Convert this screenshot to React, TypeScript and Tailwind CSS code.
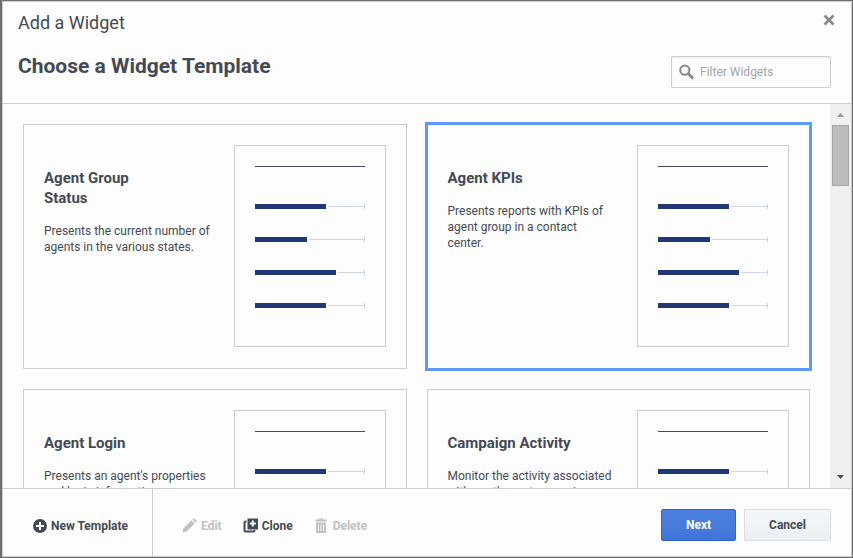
import React, { useState } from 'react';

interface WidgetTemplate {
  title: string;
  description: string;
}

const templates: WidgetTemplate[] = [
  { title: 'Agent Group Status', description: 'Presents the current number of agents in the various states.' },
  { title: 'Agent KPIs', description: 'Presents reports with KPIs of agent group in a contact center.' },
  { title: 'Agent Login', description: "Presents an agent's properties and login information." },
  { title: 'Campaign Activity', description: 'Monitor the activity associated with another set campaign.' },
];

const previewBars = [71, 52, 81, 71];

const CloseIcon = () => (
  <svg className="size-3" viewBox="0 0 12 12" fill="none" stroke="currentColor" strokeWidth="2.6">
    <path d="M1.500 1.500l9 9M10.500 1.500l-9 9" />
  </svg>
);

const SearchIcon = () => (
  <svg className="size-4 shrink-0 text-[#85888d]" viewBox="0 0 16 16" fill="none" stroke="currentColor">
    <circle cx="5.8" cy="6.2" r="4.6" strokeWidth="2" />
    <path d="M9.4 9.8l3.900 4" strokeWidth="3" strokeLinecap="round" />
  </svg>
);

const PlusIcon = () => (
  <svg className="size-3.5" viewBox="0 0 14 14">
    <circle cx="7" cy="7" r="7" fill="currentColor" />
    <path d="M7 3v8M3 7h8" stroke="#fdfdfd" strokeWidth="2" />
  </svg>
);

const PencilIcon = () => (
  <svg className="size-[15px]" viewBox="0 0 15 15" fill="currentColor">
    <path d="M0.500 14.500l.8-3.900L9.600 2.300l3.100 3.100L4.400 13.700z" />
    <path d="M10.300 1.600l.9-.9a1 1 0 0 1 1.400 0l1.700 1.700a1 1 0 0 1 0 1.400l-.9.9z" />
  </svg>
);

const CloneIcon = () => (
  <svg className="size-[15px]" viewBox="0 0 15 15">
    <path d="M3.500 3.500H2.500a1 1 0 0 0-1 1v8a1 1 0 0 0 1 1h8a1 1 0 0 0 1-1v-.500" fill="none" stroke="currentColor" strokeWidth="2" />
    <path d="M4.500 0.500H15V11.500H4.500z" fill="currentColor" />
    <path d="M9.800 2.500v6M6.800 5.500h6" stroke="#fdfdfd" strokeWidth="2" />
  </svg>
);

const TrashIcon = () => (
  <svg className="size-[15px]" viewBox="0 0 15 15" fill="currentColor">
    <path d="M5 0.500h4v1h3.500v2h-11v-2H5z" />
    <path fillRule="evenodd" d="M2 4.500h10V15H2zM4 6.500v6.500h1V6.500zM6.500 6.500v6.500h1V6.500zM9 6.500v6.500h1V6.500z" />
  </svg>
);

const Preview = () => (
  <div className="w-[152px] h-[202px] shrink-0 border border-[#cdcdcd] p-5">
    <div className="h-px bg-[#454c57] mb-[37px]"></div>
    <div className="flex flex-col gap-7">
      {previewBars.map((width, i) => (
        <div key={i} className="flex items-center h-[5px] gap-0.5">
          <div className="h-full bg-[#213874]" style={{ width }}></div>
          <div className="flex-1 h-px bg-[#d0d7e0]"></div>
          <div className="w-px h-full bg-[#c8d0da] -ml-0.5"></div>
        </div>
      ))}
    </div>
  </div>
);

interface CardProps {
  template: WidgetTemplate;
  selected: boolean;
  onSelect: () => void;
}

const TemplateCard: React.FC<CardProps> = ({ template, selected, onSelect }) => (
  <button
    type="button"
    onClick={onSelect}
    aria-pressed={selected}
    className={`flex items-start justify-between border p-5 pb-[21px] text-left ${
      selected ? 'border-[#5e98fc] ring-2 ring-[#5e98fc]' : 'border-[#cdcdcd]'
    }`}
  >
    <div className="max-w-[168px] pt-[23px]">
      <h3 className="max-w-32 text-[15px] leading-5 font-bold">{template.title}</h3>
      <p className="mt-[15px] text-xs leading-4">{template.description}</p>
    </div>
    <Preview />
  </button>
);

const App: React.FC = () => {
  const [selected, setSelected] = useState('Agent KPIs');
  const [filter, setFilter] = useState('');

  const visible = templates.filter((t) => t.title.toLowerCase().includes(filter.toLowerCase()));

  return (
    <div className="h-screen border border-l-2 border-[#6e6d71] font-[Roboto,sans-serif] text-[#444a54]">
      <div className="flex flex-col h-full border border-[#cdcdcd] bg-[#fdfdfd]">
        <header className="flex justify-between shrink-0 border-b border-[#cdcdcd] pl-[15px] pr-5 pb-[15px]">
          <div className="pt-[9px] pb-2.5">
            <h1 className="text-lg leading-6">Add a Widget</h1>
            <h2 className="mt-[19px] text-[21px] leading-6 font-bold">Choose a Widget Template</h2>
          </div>
          <div className="flex flex-col items-end justify-between pt-3">
            <button type="button" aria-label="Close" className="-mr-1 text-[#85888d]">
              <CloseIcon />
            </button>
            <label className="flex items-center gap-[5px] w-40 h-8 rounded-xs border border-[#cdcdcd] px-[7px] shadow-[inset_0_1px_2px_rgba(0,0,0,0.08)]">
              <SearchIcon />
              <input
                type="text"
                aria-label="Filter Widgets"
                placeholder="Filter Widgets"
                value={filter}
                onChange={(e) => setFilter(e.target.value)}
                className="w-full min-w-0 text-xs outline-none placeholder:text-[#a3a5a9]"
              />
            </label>
          </div>
        </header>

        <main className="flex flex-1 min-h-0">
          <div className="flex-1 overflow-hidden">
            <div className="grid grid-cols-2 gap-5 p-5">
              {visible.map((t) => (
                <TemplateCard
                  key={t.title}
                  template={t}
                  selected={t.title === selected}
                  onSelect={() => setSelected(t.title)}
                />
              ))}
            </div>
          </div>
          <div className="flex flex-col items-center w-[21px] bg-[#f0f0f0] py-[9px]">
            <svg className="w-[7px] h-1" viewBox="0 0 7 4" fill="#999999">
              <path d="M0 4L3.500 0L7 4z" />
            </svg>
            <div className="w-[17px] h-[61px] mt-2 border border-[#a6a6a6] bg-[#bcbcbc]"></div>
            <svg className="w-[7px] h-1 mt-auto" viewBox="0 0 7 4" fill="#4a4a4a">
              <path d="M0 0L3.500 4L7 0z" />
            </svg>
          </div>
        </main>

        <footer className="flex items-stretch shrink-0 h-[68px] border-t border-[#cdcdcd] text-xs font-bold">
          <div className="flex items-center w-[150px] border-r border-[#cdcdcd] pl-[30px] pt-1.5">
            <button type="button" className="flex items-center gap-1">
              <PlusIcon />
              New Template
            </button>
          </div>
          <div className="flex items-center gap-[21px] pl-[29px] pt-1.5">
            <button type="button" disabled className="flex items-center gap-1 text-[#bfc1c4]">
              <PencilIcon />
              Edit
            </button>
            <button type="button" className="flex items-center gap-1">
              <CloneIcon />
              Clone
            </button>
            <button type="button" disabled className="flex items-center gap-1 text-[#bfc1c4]">
              <TrashIcon />
              Delete
            </button>
          </div>
          <div className="flex items-center gap-2 ml-auto pr-5 pt-1">
            <button
              type="button"
              className="w-[75px] h-8 rounded-xs border border-[#2e63d3] bg-linear-to-b from-[#4e80e0] to-[#4075d8] text-white"
            >
              Next
            </button>
            <button
              type="button"
              className="w-[87px] h-8 rounded-xs border border-[#d5dde6] bg-linear-to-b from-[#f4f7fa] to-[#ebeff3]"
            >
              Cancel
            </button>
          </div>
        </footer>
      </div>
    </div>
  );
};

export default App;
